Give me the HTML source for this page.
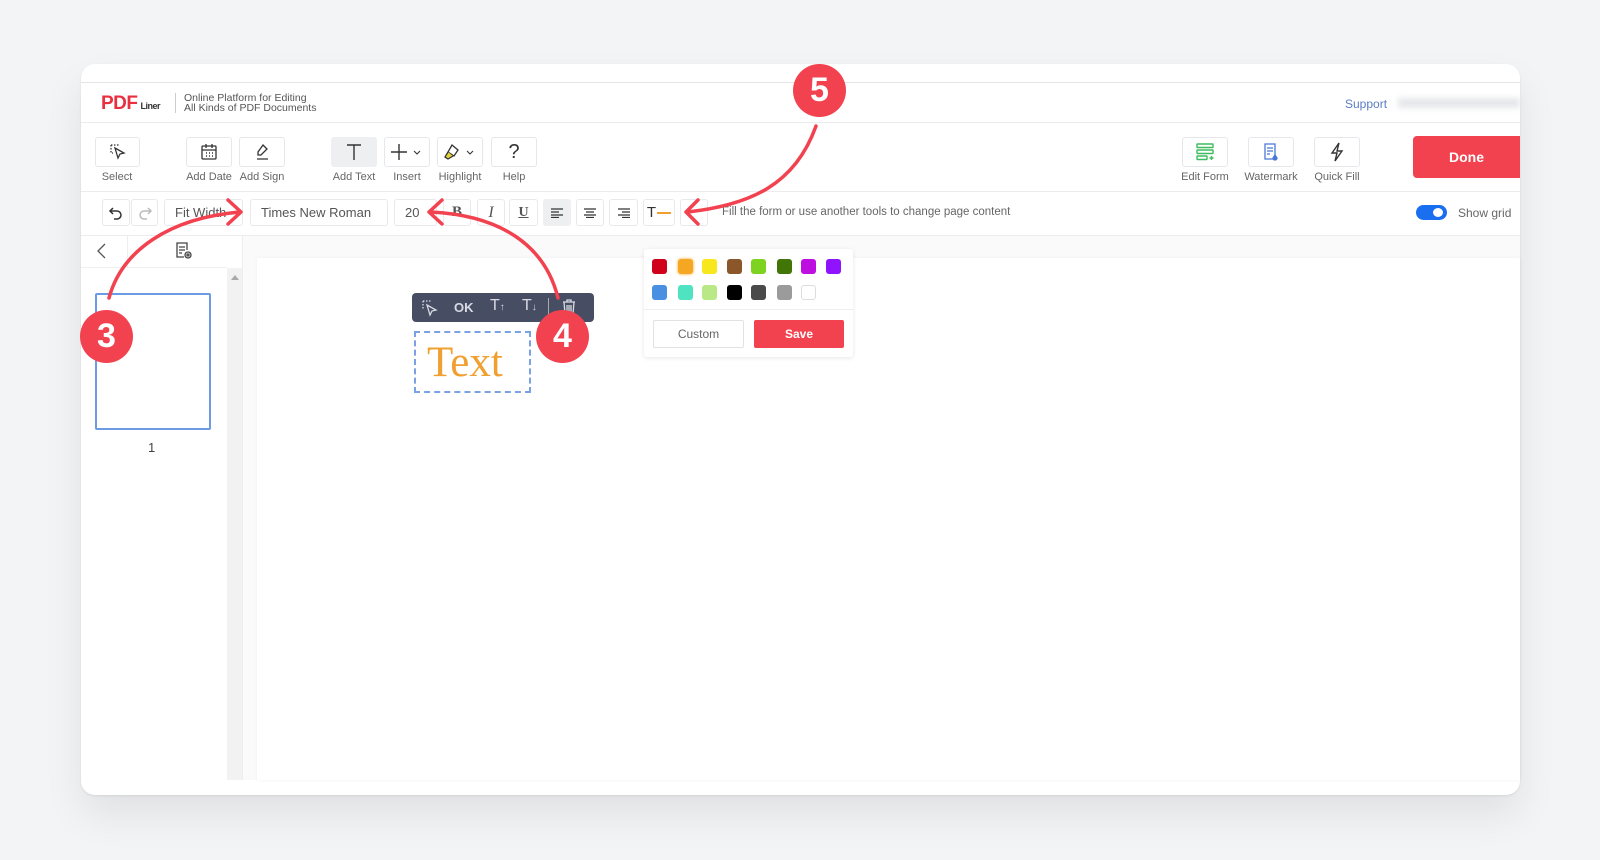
<!DOCTYPE html>
<html><head><meta charset="utf-8"><style>
*{margin:0;padding:0;box-sizing:border-box}
body{width:1600px;height:860px;background:#f3f4f6;font-family:"Liberation Sans",sans-serif;position:relative;overflow:hidden;color:#555}
.a{position:absolute}
.card{left:81px;top:64px;width:1439px;height:731px;background:#fff;border-radius:14px;box-shadow:0 20px 40px rgba(0,0,0,.08),0 1px 2px rgba(0,0,0,.08);overflow:hidden}
.btn{position:absolute;border:1px solid #e6e7ea;border-radius:3px;background:#fff;display:flex;align-items:center;justify-content:center}
.lbl{position:absolute;font-size:11px;color:#666;text-align:center;width:80px}
.fb{position:absolute;top:199px;height:27px;border:1px solid #e8e9ec;border-radius:3px;background:#fff;display:flex;align-items:center;justify-content:center;font-size:13px;color:#555}
.sw{position:absolute;width:15px;height:15px;border-radius:3px}
.circ{position:absolute;width:53px;height:53px;border-radius:50%;background:#f2424f;color:#fff;font-size:34px;font-weight:bold;display:flex;align-items:center;justify-content:center}
</style></head><body>
<div class="a card"></div>
<div class="a" style="left:81px;top:82px;width:1439px;height:1px;background:#e3e4e8"></div>
<div class="a" style="left:81px;top:122px;width:1439px;height:1px;background:#ebecef"></div>
<div class="a" style="left:81px;top:191px;width:1439px;height:1px;background:#ebecef"></div>
<div class="a" style="left:81px;top:235px;width:1439px;height:1px;background:#ebecef"></div>
<div class="a" style="left:101px;top:93px;font-size:19px;font-weight:bold;color:#e8303f;letter-spacing:-0.5px">PDF<span style="font-size:9px;color:#333;margin-left:3px">Liner</span></div>
<div class="a" style="left:175px;top:93px;width:1px;height:20px;background:#ccc"></div>
<div class="a" style="left:184px;top:93px;font-size:10.5px;line-height:10px;color:#555">Online Platform for Editing<br>All Kinds of PDF Documents</div>
<div class="a" style="left:836px;top:97px;font-size:11px;color:#888">k</div>
<div class="a" style="left:1345px;top:97px;font-size:12px;color:#5b7cc4">Support</div>
<div class="a" style="left:1398px;top:98px;width:122px;height:10px;background:#e6e7ea;filter:blur(3px)"></div>
<div class="btn" style="left:95px;top:137px;width:45px;height:30px"><svg width="18" height="18" viewBox="0 0 18 18" fill="none" stroke="#333" stroke-width="1.3"><path d="M2 2h7v2M2 2v8h2" stroke-dasharray="1.5 1.5"/><path d="M6 5l9 5-4 1-2 4z"/></svg></div>
<div class="lbl" style="left:77px;top:171px">Select</div>
<div class="btn" style="left:186px;top:137px;width:46px;height:30px"><svg width="18" height="18" viewBox="0 0 18 18" fill="none" stroke="#333" stroke-width="1.3"><rect x="2" y="3" width="14" height="13" rx="1"/><path d="M2 7h14M6 1v4M12 1v4"/><path d="M6 10h1M9 10h1M12 10h1M6 13h1M9 13h1M12 13h1" stroke-width="1.5"/></svg></div>
<div class="lbl" style="left:169px;top:171px">Add Date</div>
<div class="btn" style="left:239px;top:137px;width:46px;height:30px"><svg width="18" height="18" viewBox="0 0 18 18" fill="none" stroke="#333" stroke-width="1.3"><path d="M10 2l4 4-6 6H5V9zM4 16h11"/></svg></div>
<div class="lbl" style="left:222px;top:171px">Add Sign</div>
<div class="btn" style="left:331px;top:137px;width:46px;height:30px;background:#eeeff1;border-color:#eeeff1"><svg width="20" height="20" viewBox="0 0 20 20" fill="none" stroke="#333" stroke-width="1.4"><path d="M3 3h14M10 3v15"/></svg></div>
<div class="lbl" style="left:314px;top:171px">Add Text</div>
<div class="btn" style="left:384px;top:137px;width:46px;height:30px"><svg width="34" height="18" viewBox="0 0 34 18" fill="none" stroke="#333" stroke-width="1.4"><path d="M9 1v16M1 9h16"/><path d="M24 8l3 3 3-3" stroke-width="1.1"/></svg></div>
<div class="lbl" style="left:367px;top:171px">Insert</div>
<div class="btn" style="left:437px;top:137px;width:46px;height:30px"><svg width="34" height="18" viewBox="0 0 34 18" fill="none" stroke="#333" stroke-width="1.3"><path d="M9 2l6 5-4 6-6-4z"/><path d="M5 9l-3 5 3 2 5-3" fill="#e4d23a"/><path d="M24 8l3 3 3-3" stroke-width="1.1"/></svg></div>
<div class="lbl" style="left:420px;top:171px">Highlight</div>
<div class="btn" style="left:491px;top:137px;width:46px;height:30px;font-size:20px;color:#333">?</div>
<div class="lbl" style="left:474px;top:171px">Help</div>
<div class="btn" style="left:1182px;top:137px;width:46px;height:30px"><svg width="20" height="20" viewBox="0 0 20 20" fill="none" stroke="#3dbb5e" stroke-width="1.4"><rect x="2" y="2" width="16" height="3.5" rx=".5"/><rect x="2" y="8" width="16" height="3.5" rx=".5"/><rect x="2" y="14" width="10" height="3.5" rx=".5"/><path d="M14.5 16h4M16.5 14v4"/></svg></div>
<div class="lbl" style="left:1165px;top:171px">Edit Form</div>
<div class="btn" style="left:1248px;top:137px;width:46px;height:30px"><svg width="18" height="20" viewBox="0 0 18 20" fill="none" stroke="#4a78d8" stroke-width="1.3"><path d="M3 2h10v15H3z"/><path d="M5 6h6M5 9h6M5 12h3"/><path d="M13 13l2 3a2 2 0 11-4 0z" fill="#4a78d8"/></svg></div>
<div class="lbl" style="left:1231px;top:171px">Watermark</div>
<div class="btn" style="left:1314px;top:137px;width:46px;height:30px"><svg width="18" height="20" viewBox="0 0 18 20" fill="none" stroke="#333" stroke-width="1.4"><path d="M11 1L4 11h5l-2 8 7-10H9z"/></svg></div>
<div class="lbl" style="left:1297px;top:171px">Quick Fill</div>
<div class="a" style="left:1413px;top:136px;width:107px;height:42px;background:#f2424f;border-radius:4px 0 0 4px;color:#fff;font-weight:bold;font-size:14px;display:flex;align-items:center;justify-content:center">Done</div>
<div class="fb" style="left:102px;width:28px"><svg width="16" height="16" viewBox="0 0 16 16" fill="none" stroke="#333" stroke-width="1.5"><path d="M5 3L2 6l3 3"/><path d="M2 6h7a4 4 0 010 8H6"/></svg></div>
<div class="fb" style="left:131px;width:27px"><svg width="16" height="16" viewBox="0 0 16 16" fill="none" stroke="#bbb" stroke-width="1.5"><path d="M11 3l3 3-3 3"/><path d="M14 6H7a4 4 0 000 8h3"/></svg></div>
<div class="fb" style="left:164px;width:79px;justify-content:flex-start;padding-left:10px">Fit Width</div>
<div class="fb" style="left:250px;width:138px;justify-content:flex-start;padding-left:10px">Times New Roman</div>
<div class="fb" style="left:394px;width:43px;justify-content:flex-start;padding-left:10px">20</div>
<div class="fb" style="left:443px;width:28px;font-family:'Liberation Serif',serif;font-weight:bold;font-size:15px">B</div>
<div class="fb" style="left:477px;width:28px;font-family:'Liberation Serif',serif;font-style:italic;font-size:16px">I</div>
<div class="fb" style="left:509px;width:29px;font-family:'Liberation Serif',serif;text-decoration:underline;font-weight:bold;font-size:14px">U</div>
<div class="fb" style="left:543px;width:28px;background:#eeeff1;border-color:#eeeff1"><svg width="12" height="10" viewBox="0 0 12 10" stroke="#333" stroke-width="1.3"><path d="M0 1h12M0 4h8M0 7h12M0 9.5h8"/></svg></div>
<div class="fb" style="left:576px;width:28px"><svg width="12" height="10" viewBox="0 0 12 10" stroke="#333" stroke-width="1.3"><path d="M0 1h12M2 4h8M0 7h12M2 9.5h8"/></svg></div>
<div class="fb" style="left:609px;width:29px"><svg width="12" height="10" viewBox="0 0 12 10" stroke="#333" stroke-width="1.3"><path d="M0 1h12M4 4h8M0 7h12M4 9.5h8"/></svg></div>
<div class="fb" style="left:643px;width:32px;font-size:15px;color:#333">T<span style="display:inline-block;width:14px;height:2px;background:#f0a030;margin-left:1px"></span></div>
<div class="fb" style="left:680px;width:28px"></div>
<div class="a" style="left:722px;top:206px;font-size:11.5px;color:#666">Fill the form or use another tools to change page content</div>
<div class="a" style="left:1416px;top:205px;width:31px;height:15px;border-radius:8px;background:#1a6ef0"></div>
<div class="a" style="left:1433px;top:208px;width:10px;height:9px;border-radius:50%;background:#fff"></div>
<div class="a" style="left:1458px;top:206px;font-size:12px;color:#666">Show grid</div>
<div class="a" style="left:127px;top:236px;width:1px;height:31px;background:#eee"></div>
<div class="a" style="left:81px;top:267px;width:146px;height:1px;background:#f0f0f0"></div>
<div class="a" style="left:242px;top:236px;width:1px;height:544px;background:#eee"></div>
<svg class="a" style="left:96px;top:243px" width="12" height="16" viewBox="0 0 12 16" fill="none" stroke="#555" stroke-width="1.3"><path d="M9 1L2 8l7 7"/></svg>
<svg class="a" style="left:174px;top:241px" width="20" height="20" viewBox="0 0 20 20" fill="none" stroke="#444" stroke-width="1.3"><path d="M10 16H3V2h10v7"/><path d="M5 6h6M5 9h6M5 12h3"/><circle cx="14" cy="14" r="3"/><circle cx="14" cy="14" r="1"/></svg>
<div class="a" style="left:227px;top:268px;width:15px;height:512px;background:#f2f2f2"></div>
<div class="a" style="left:231px;top:275px;width:0;height:0;border-left:4px solid transparent;border-right:4px solid transparent;border-bottom:5px solid #aaa"></div>
<div class="a" style="left:95px;top:293px;width:116px;height:137px;border:2px solid #6b9be3;border-radius:2px"></div>
<div class="a" style="left:148px;top:440px;font-size:13px;color:#444">1</div>
<div class="a" style="left:243px;top:236px;width:1277px;height:544px;background:#fafafb"></div>
<div class="a" style="left:257px;top:258px;width:1263px;height:522px;background:#fff;box-shadow:0 0 4px rgba(0,0,0,.05)"></div>
<div class="a" style="left:412px;top:293px;width:182px;height:29px;background:#474e63;border-radius:4px"></div>
<svg class="a" style="left:420px;top:298px" width="20" height="20" viewBox="0 0 20 20" fill="none" stroke="#d8dbe3" stroke-width="1.3"><path d="M3 3h8M3 3v9" stroke-dasharray="1.5 1.5"/><path d="M7 7l9 5-4 1-2 4z"/></svg>
<div class="a" style="left:454px;top:300px;font-size:13px;font-weight:bold;color:#d8dbe3">OK</div>
<div class="a" style="left:490px;top:297px;font-size:16px;color:#d8dbe3">T<span style="font-size:10px">↑</span></div>
<div class="a" style="left:522px;top:297px;font-size:16px;color:#d8dbe3">T<span style="font-size:10px">↓</span></div>
<div class="a" style="left:548px;top:298px;width:1px;height:18px;background:#aaa"></div>
<svg class="a" style="left:562px;top:299px" width="14" height="16" viewBox="0 0 14 16" fill="none" stroke="#d8dbe3" stroke-width="1.3"><path d="M1 3h12M5 3V1h4v2M2 3l1 12h8l1-12M5 6v7M7 6v7M9 6v7"/></svg>
<div class="a" style="left:414px;top:331px;width:117px;height:62px;border:2px dashed #7aa2e3"></div>
<div class="a" style="left:427px;top:340px;font-family:'Liberation Serif',serif;font-size:43px;color:#f0a030;line-height:46px">Text</div>
<div class="a" style="left:644px;top:249px;width:209px;height:108px;background:#fff;border-radius:3px;box-shadow:0 1px 5px rgba(0,0,0,.1)"></div>
<div class="sw" style="left:652px;top:259px;background:#d0021b"></div>
<div class="sw" style="left:678px;top:259px;background:#f5a623;box-shadow:0 0 3px #f5a623"></div>
<div class="sw" style="left:702px;top:259px;background:#f8e71c"></div>
<div class="sw" style="left:727px;top:259px;background:#8b572a"></div>
<div class="sw" style="left:751px;top:259px;background:#7ed321"></div>
<div class="sw" style="left:777px;top:259px;background:#417505"></div>
<div class="sw" style="left:801px;top:259px;background:#bd10e0"></div>
<div class="sw" style="left:826px;top:259px;background:#9013fe"></div>
<div class="sw" style="left:652px;top:285px;background:#4a90e2"></div>
<div class="sw" style="left:678px;top:285px;background:#50e3c2"></div>
<div class="sw" style="left:702px;top:285px;background:#b8e986"></div>
<div class="sw" style="left:727px;top:285px;background:#000"></div>
<div class="sw" style="left:751px;top:285px;background:#4a4a4a"></div>
<div class="sw" style="left:777px;top:285px;background:#9b9b9b"></div>
<div class="sw" style="left:801px;top:285px;background:#fff;border:1px solid #ddd"></div>
<div class="a" style="left:644px;top:309px;width:209px;height:1px;background:#eee"></div>
<div class="a" style="left:653px;top:320px;width:91px;height:28px;border:1px solid #e2e2e2;border-radius:2px;font-size:12px;color:#666;display:flex;align-items:center;justify-content:center">Custom</div>
<div class="a" style="left:754px;top:320px;width:90px;height:28px;background:#f2424f;border-radius:2px;font-size:12px;font-weight:bold;color:#fff;display:flex;align-items:center;justify-content:center">Save</div>
<svg class="a" style="left:0;top:0" width="1600" height="860" fill="none" stroke="#f2424f" stroke-width="3.5" stroke-linecap="round" stroke-linejoin="round">
<path d="M816 126C795 185 750 205 688 212"/><path d="M698 200L686 212 698 224"/>
<path d="M109 298C122 250 170 218 240 212"/><path d="M228 200L241 212 228 224"/>
<path d="M558 298C545 245 500 215 430 212"/><path d="M442 200L429 212 442 224"/>
</svg>
<div class="circ" style="left:793px;top:64px">5</div>
<div class="circ" style="left:80px;top:310px">3</div>
<div class="circ" style="left:536px;top:310px">4</div>
</body></html>
